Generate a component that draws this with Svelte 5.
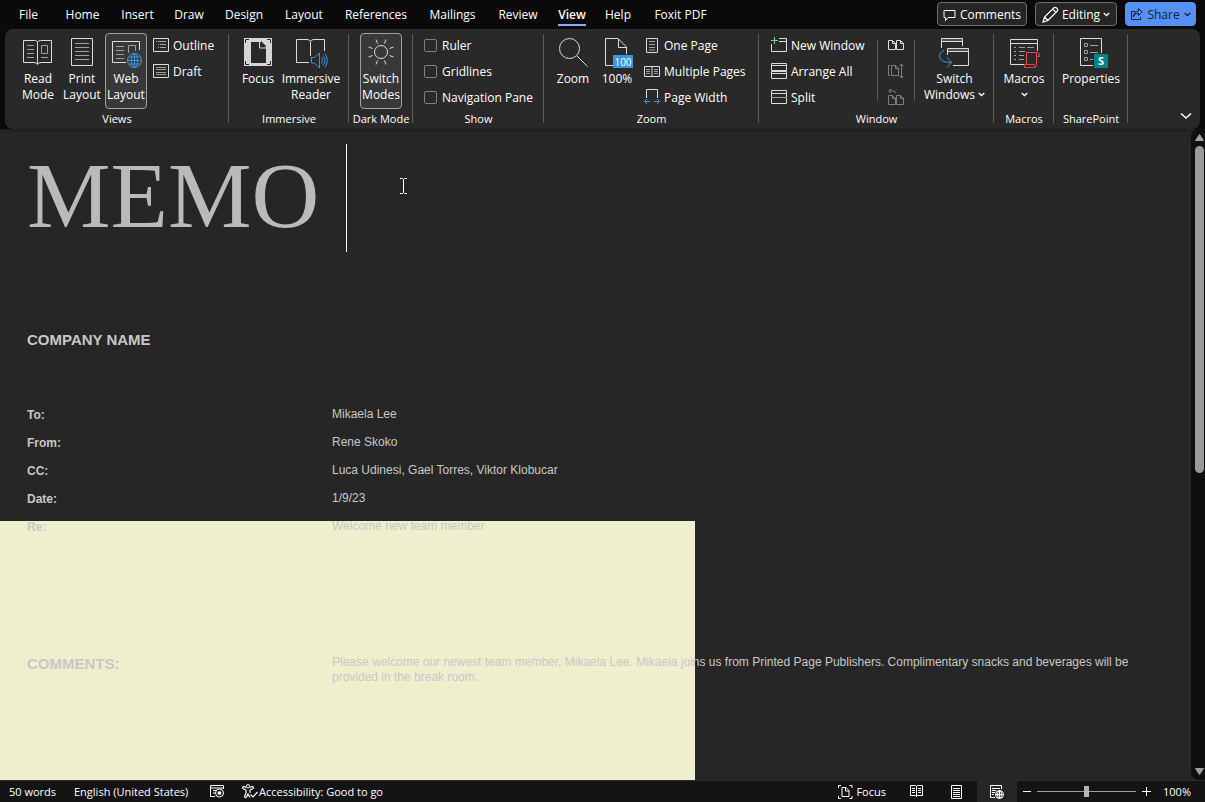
<script>
  const tabs = ['File', 'Home', 'Insert', 'Draw', 'Design', 'Layout', 'References', 'Mailings', 'Review', 'View', 'Help', 'Foxit PDF'];
  const fields = [
    ['To:', 'Mikaela Lee'],
    ['From:', 'Rene Skoko'],
    ['CC:', 'Luca Udinesi, Gael Torres, Viktor Klobucar'],
    ['Date:', '1/9/23'],
    ['Re:', 'Welcome new team member']
  ];
  const toggles = ['Ruler', 'Gridlines', 'Navigation Pane'];
  let zoom = $state(100);
</script>

{#snippet chevron()}
  <svg class="chev" width="7" height="5" viewBox="0 0 7 5"><path d="M.7 1 3.5 3.6 6.3 1" stroke-width="1.3" /></svg>
{/snippet}

<div class="app">
  <header>
    <nav>
      {#each tabs as tab}
        <button class="tab" class:active={tab === 'View'}><span>{tab}</span></button>
      {/each}
    </nav>
    <div class="actions">
      <button class="action comments">
        <svg width="13" height="14" viewBox="0 0 13 14"><path d="M1 2.500h11v7h-7l-2.500 3v-3h-1.500z" /></svg>
        Comments
      </button>
      <button class="action editing">
        <svg width="17" height="17" viewBox="0 0 17 17"><path d="M1 16 2.500 11 12 1.700Q13.300.700 14.900 2.200T15.300 5L5.900 14.500zM10.700 3l3.300 3.300M2.500 11l3.400 3.500" stroke-width="1.200" /></svg>
        Editing {@render chevron()}
      </button>
      <button class="action share">
        <svg width="13" height="13" viewBox="0 0 13 13"><path d="M5 3.500H1.500v8h9V9M3.500 9Q4 5 8.500 5V7.500L12.300 4 8.500 .7V3Q3.500 3.500 3.500 9z" /></svg>
        Share {@render chevron()}
      </button>
    </div>
  </header>

  <section class="ribbon" aria-label="View">
    <div class="group">
      <div class="tools views">
        <button class="big">
          <svg width="32" height="32" viewBox="0 0 32 32">
            <path d="M15.500 6Q15 4.500 12.500 4.500H1.500v22H12Q15 26.500 15.500 28.500 16 26.500 19 26.500H29.500v-22H18.500Q16 4.500 15.500 6V28" />
            <path class="dim" d="M5 9.500h7M5 13.500h7M5 17.500h7M5 21.500h7M19 21.500h7M19.500 9.500h6v8h-6z" />
          </svg>
          <span>Read<br />Mode</span>
        </button>
        <button class="big">
          <svg width="32" height="32" viewBox="0 0 32 32">
            <path d="M5.500 2.500h21v27h-21z" />
            <path class="dim" d="M9 7.500h14M9 11.500h14M9 15.500h14M9 19.500h14M9 23.500h14" />
          </svg>
          <span>Print<br />Layout</span>
        </button>
        <button class="big selected">
          <svg width="32" height="32" viewBox="0 0 32 32">
            <path d="M29.500 14V5.500h-27v21H16" />
            <path class="dim" d="M6 10.500h8M6 14.500h8M6 18.500h8M6 22.500h8M18.500 17V9.500h7V15" />
            <g class="blue"><circle cx="24.500" cy="24.500" r="7" /><ellipse cx="24.500" cy="24.500" rx="3" ry="7" /><path d="M17.500 24.500h14M18.500 21h12M18.500 28h12M24.500 17.500v14" /></g>
          </svg>
          <span>Web<br />Layout</span>
        </button>
        <div class="stack">
          <button class="small">
            <svg width="16" height="16" viewBox="0 0 16 16"><path d="M.5.5h15v13H.5z" /><path class="dim" d="M3 3.500h1M5 3.500h8M5 6.500h1M7 6.500h6M5 9.500h1M7 9.500h6" /></svg>
            Outline
          </button>
          <button class="small">
            <svg width="16" height="16" viewBox="0 0 16 16"><path d="M.5.5h15v13H.5z" /><path class="dim" d="M3 3.500h10M3 5.500h10M3 8.500h10M3 10.500h10" /></svg>
            Draft
          </button>
        </div>
      </div>
      <h2>Views</h2>
    </div>

    <div class="group">
      <div class="tools immersive">
        <button class="big focus">
          <svg width="32" height="32" viewBox="0 0 32 32">
            <path d="M2 2h28v28H2z" fill="#d6d6d6" stroke="none" />
            <path d="M9 6h9.500l5.500 5.500V27H9z" fill="#292929" stroke="none" />
            <path d="M17.500 6v6H24" stroke="#d6d6d6" /><path d="M19 5v5.500h5.500z" fill="#292929" stroke="none" />
            <path d="M3.500 7V3.500H7M25 3.500h3.500V7M3.500 25v3.500H7M25 28.500h3.500V25" stroke="#292929" />
          </svg>
          <span>Focus</span>
        </button>
        <button class="big reader">
          <svg width="32" height="32" viewBox="0 0 32 32">
            <path d="M14 26.500H1.500v-23H12Q15 3.500 15.500 5.500 16 3.500 19 3.500H29.500V15M15.500 5.500V20" />
            <path class="blue" d="M16.500 21.500h3l5-4.500v15l-5-5h-3zM26.500 21.500q2 3 0 6M28 19.500q4 5 0 10M30 17.500q4.500 7 0 14" />
          </svg>
          <span>Immersive<br />Reader</span>
        </button>
      </div>
      <h2>Immersive</h2>
    </div>

    <div class="group">
      <div class="tools modes">
        <button class="big selected">
          <svg width="32" height="32" viewBox="0 0 32 32">
            <circle cx="16" cy="16" r="6.500" />
            <path d="M19.500 7.500 21 3.500M24.500 12.500 28.500 11M24.500 19.500 28.500 21M19.500 24.500 21 28.500M12.500 24.500 11 28.500M7.500 19.500 3.500 21M7.500 12.500 3.500 11M12.500 7.500 11 3.500" />
          </svg>
          <span>Switch<br />Modes</span>
        </button>
      </div>
      <h2>Dark Mode</h2>
    </div>

    <div class="group">
      <div class="tools show">
        <div class="stack">
          {#each toggles as name}
            <label class="small check"><input type="checkbox" />{name}</label>
          {/each}
        </div>
      </div>
      <h2>Show</h2>
    </div>

    <div class="group">
      <div class="tools zoom">
        <button class="big">
          <svg width="32" height="32" viewBox="0 0 32 32"><circle cx="12.500" cy="12.500" r="10" /><path d="m20 20 10.500 10.500" /></svg>
          <span>Zoom</span>
        </button>
        <button class="big">
          <svg width="32" height="32" viewBox="0 0 32 32">
            <path d="M12 29.500H4.500v-27H17l8.500 8.500V18M17.500 3v8.500H25" />
            <path d="M12 19h20v13H12z" fill="#3a96dd" stroke="none" />
            <text x="22" y="29.500" text-anchor="middle">100</text>
          </svg>
          <span>100%</span>
        </button>
        <div class="stack">
          <button class="small">
            <svg width="16" height="16" viewBox="0 0 16 16"><path d="M2.500.5h11v14h-11z" /><path class="dim" d="M5 3.500h6M5 6.500h6M5 9.500h6M5 12h6" /></svg>
            One Page
          </button>
          <button class="small">
            <svg width="16" height="16" viewBox="0 0 16 16"><path d="M.5 2.500h15v10H.5zM8 2v11" /><path class="dim" d="M2 5.500h4M2 7.500h4M2 9.500h4M10 5.500h4M10 7.500h4M10 9.500h4" /></svg>
            Multiple Pages
          </button>
          <button class="small">
            <svg width="16" height="16" viewBox="0 0 16 16"><path d="M2.500 8V-.5h11V8" /><path class="blue" d="M.5 11.500H6M3 9 .5 11.500 3 14M15.500 11.500H10M13 9l2.500 2.500L13 14" /></svg>
            Page Width
          </button>
        </div>
      </div>
      <h2>Zoom</h2>
    </div>

    <div class="group">
      <div class="tools window">
        <div class="stack labelled">
          <button class="small">
            <svg width="16" height="16" viewBox="0 0 16 16"><path d="M.5 6v7.500h15V.5H8M8 3.500h8" /><path d="M3.500 -1v7M0 2.500h7" stroke="#6fdc7c" /></svg>
            New Window
          </button>
          <button class="small">
            <svg width="16" height="16" viewBox="0 0 16 16"><path d="M.5-.5h15v7H.5zM.5 7.500h15v7H.5zM0 1.500h16M0 9.500h16" /></svg>
            Arrange All
          </button>
          <button class="small">
            <svg width="16" height="16" viewBox="0 0 16 16"><path d="M.5.5h15v13H.5zM0 3.500h16" /><path class="dim" d="M0 7.500h16" /></svg>
            Split
          </button>
        </div>
        <div class="stack framed">
          <button class="small" aria-label="View Side by Side">
            <svg width="16" height="16" viewBox="0 0 16 16"><path d="M.5 2.500h4l3 3v6h-7zM8.500 2.500h4l3 3v6h-7zM4.500 2.500v3h3M12.500 2.500v3h3" /></svg>
          </button>
          <button class="small" aria-label="Synchronous Scrolling">
            <svg class="off" width="16" height="16" viewBox="0 0 16 16"><path d="M2 1.500H.5v10H2M3.500 1.500h4l3 3v7h-7zM7.500 1.500v3h3M13.500 0v14M11.500 2l2-2 2 2M11.500 12l2 2 2-2" /></svg>
          </button>
          <button class="small" aria-label="Reset Window Position">
            <svg class="off" width="16" height="16" viewBox="0 0 16 16"><path d="M.5 5.500h4l3 3v6h-7zM8.500 5.500h4l3 3v6h-7zM4.500 5.500v3h3M12.500 5.500v3h3M3-1 .7 1 3 3M1 1h4.500q2 0 2 2" /></svg>
          </button>
        </div>
        <button class="big switch">
          <svg width="32" height="32" viewBox="0 0 32 32">
            <path d="M2.500 12V2.500h21V10M2.500 5.500h21M8.500 19v-6.500h21v17H14M8.500 15.500h21" />
            <path d="M3 4h20M9 14h20" stroke="#777" /><path class="blue" d="M5 14.500Q.5 16 .5 20 1 26.500 12 26.500M8 21.500l4.500 5-4.500 5" />
          </svg>
          <span>Switch<br />Windows {@render chevron()}</span>
        </button>
      </div>
      <h2>Window</h2>
    </div>

    <div class="group">
      <div class="tools macros">
        <button class="big">
          <svg width="32" height="32" viewBox="0 0 32 32">
            <path d="M29.500 15V3.500h-27v25H16M2.500 7.500h27" />
            <path class="dim" d="M6 11.500h2M6 15.500h2M6 19.500h2M6 23.500h2M11 11.500h6M19 11.500h7M11 15.500h6M11 19.500h5M11 23.500h5" />
            <path d="M18.500 28V16.500h11q2.500 0 2 4h-3V29q-.5 2.500-3 2.500H16.500v-3H26q0 3 1.500 3M28.500 20v-3.500" stroke="#e8484c" />
          </svg>
          <span>Macros<br />{@render chevron()}</span>
        </button>
      </div>
      <h2>Macros</h2>
    </div>

    <div class="group">
      <div class="tools sharepoint">
        <button class="big">
          <svg width="32" height="32" viewBox="0 0 32 32">
            <path d="M18 29.500H5.500v-27h21V17" />
            <path class="dim" d="M9.500 7.500h3v3h-3zM9.500 14.500h3v3h-3zM9.500 21.500h3v3h-3zM15 9.500h8M15 16.500h8M15 23.500h3" />
            <path d="M19 18h14v14H19z" fill="#038387" stroke="none" />
            <text class="badge" x="26" y="29" text-anchor="middle">S</text>
          </svg>
          <span>Properties</span>
        </button>
      </div>
      <h2>SharePoint</h2>
    </div>

    <button class="collapse" aria-label="Collapse the Ribbon">
      <svg width="12" height="8" viewBox="0 0 12 8"><path d="m1 1.500 5 4.500 5-4.500" stroke-width="1.500" /></svg>
    </button>
  </section>

  <main>
    <article>
      <div class="highlight"></div>
      <h1><span>MEMO</span><i class="caret"></i>
        <svg class="pointer" width="9" height="17" viewBox="0 0 9 17"><path d="M1 .5h2.500l1 1 1-1H8M4.500 1v14M1 15.500h2.500l1-1 1 1H8" stroke="#fff" /></svg>
      </h1>
      <h3>COMPANY NAME</h3>
      <dl>
        {#each fields as [term, value]}
          <dt>{term}</dt>
          <dd>{value}</dd>
        {/each}
      </dl>
      <div class="remarks">
        <h3>COMMENTS:</h3>
        <p>Please welcome our newest team member, Mikaela Lee. Mikaela joins us from Printed Page Publishers. Complimentary snacks and beverages will be provided in the break room.</p>
      </div>
    </article>
    <div class="scroll">
      <svg width="9" height="7" viewBox="0 0 9 7"><path d="M4.500.5 8.500 6.500h-8z" fill="#a0a0a0" stroke="#a0a0a0" /></svg>
      <div class="track"><div class="thumb"></div></div>
      <svg width="9" height="7" viewBox="0 0 9 7"><path d="M4.500 6.500 8.500.5h-8z" fill="#a0a0a0" stroke="#a0a0a0" /></svg>
    </div>
  </main>

  <footer>
    <button class="words">50 words</button>
    <button class="language">English (United States)</button>
    <button class="record" aria-label="Record Macro">
      <svg width="15" height="13" viewBox="0 0 15 13"><path d="M5 11.500H.5V.5h13V4M.5 3h13M3 5.500h3M3 8h2" /><circle cx="9.500" cy="8" r="4" /><circle cx="9.500" cy="8" r="1.500" fill="#fff" /></svg>
    </button>
    <button class="access">
      <svg width="16" height="15" viewBox="0 0 16 15"><circle cx="6" cy="2.300" r="1.700" /><path d="M4.300 3.500 1.500 2.500Q0 3.500 1 4.500L4 6v3L2.500 13q1 1.500 2 0L6 10l2 3.500M7.700 3.500l2.800-1q1.500 1 .5 2L8 6v3M8.500 10.500l2.500 2.500 4.500-5" stroke-width="1.200" /></svg>
      Accessibility: Good to go
    </button>
    <div class="modesbar">
      <button class="focusmode">
        <svg width="15" height="14" viewBox="0 0 15 14"><path d="M3 .5H.5V3M11.500.5H14V3M3 13.500H.5V11M11.500 13.500H14V11M4 2.500h4l3 3v6H4zM7.500 2.500v3.500H11" /></svg>
        Focus
      </button>
      <button aria-label="Read Mode">
        <svg width="14" height="13" viewBox="0 0 14 13"><path d="M.5.500h5l1 1 1-1h5v10h-5l-1 1-1-1h-5zM6.500 1v11M2 3.500h3M2 5.500h3M2 7.500h3M8 3.500h3M8 5.500h3M8 7.500h3" /></svg>
      </button>
      <button aria-label="Print Layout">
        <svg width="12" height="14" viewBox="0 0 12 14"><path d="M.5.500h10v13H.5zM2 3.500h7M2 5.500h7M2 7.500h7M2 9.500h7M2 11.500h7" /></svg>
      </button>
      <button class="current" aria-label="Web Layout">
        <svg width="14" height="14" viewBox="0 0 14 14"><path d="M5 12.500H.5V.5h11V4M2 3.500h8M2 5.500h4M2 7.500h3M2 9.500h2" /><circle cx="9.500" cy="9.500" r="4" /><path d="M5.500 9.500h8M9.500 5.500v8" /><ellipse cx="9.500" cy="9.500" rx="2" ry="4" /></svg>
      </button>
      <button class="step" aria-label="Zoom out"><svg width="9" height="9" viewBox="0 0 9 9"><path d="M0 4.500h8" /></svg></button>
      <input type="range" min="10" max="190" bind:value={zoom} aria-label="Zoom level" />
      <button class="step" aria-label="Zoom in"><svg width="9" height="9" viewBox="0 0 9 9"><path d="M0 4.500h9M4.500 0v9" /></svg></button>
      <button class="percent">{zoom}%</button>
    </div>
  </footer>
</div>

<style>
  :global(body) { margin: 0; background: #0a0a0a; }
  .app { display: flex; flex-direction: column; min-height: 100vh; font: 12px/16px "Open Sans", "Noto Sans", sans-serif; color: #fff; background: #0a0a0a; }
  button { font: inherit; color: inherit; background: none; border: 0; padding: 0; margin: 0; white-space: nowrap; }
  svg { display: block; flex: none; fill: none; stroke: #dcdcdc; overflow: visible; }
  .dim { stroke: #a0a0a0; }
  .blue { stroke: #3a96dd; }
  .off { stroke: #808080; }
  .chev { display: inline-block; stroke: currentColor; vertical-align: 2px; }

  header { display: flex; justify-content: space-between; height: 29px; padding: 0 9px 0 2px; }
  nav { display: grid; grid-template-columns: 53px 55px 55px 48px 62px 58px 86px 67px 64px 44px 48px 77px; }
  .tab { display: flex; justify-content: center; padding-top: 7px; }
  .tab span { height: 17px; }
  .active { font-weight: 600; }
  .active span { border-bottom: 2px solid #8ab0f8; }
  .actions { display: flex; gap: 8px; padding-top: 2px; }
  .action { box-sizing: border-box; display: flex; align-items: center; justify-content: center; gap: 4px; height: 24px; padding-top: 1px; border: 1px solid #707070; border-radius: 4px; background: #262626; }
  .comments { width: 90px; }
  .editing { width: 82px; gap: 3px; }
  .share { width: 71px; color: #10203c; background: #5690f4; border-color: #5690f4; }
  .action svg { stroke: currentColor; }

  .ribbon { display: grid; grid-template-columns: 224px 120px 64px 131px 215px 235px 60px 74px 1fr; margin: 0 5px; height: 100px; border-radius: 8px; background: #292929; }
  .group { position: relative; padding-top: 4px; }
  .group::after { content: ""; position: absolute; right: 0; top: 5px; bottom: 6px; width: 1px; background: #5c5c5c; }
  h2 { margin: 0; font-size: 11px; line-height: 20px; font-weight: 400; text-align: center; white-space: nowrap; }
  .tools { display: flex; height: 76px; }
  .big { box-sizing: border-box; display: flex; flex-direction: column; align-items: center; gap: 3px; padding-top: 3px; width: 44px; height: 76px; }
  .selected { width: 42px; padding-top: 2px; border: 1px solid #a0a0a0; border-radius: 4px; background: #383838; }
  .stack { display: grid; grid-template-rows: repeat(3, 26px); align-content: start; justify-items: start; }
  .small { display: flex; align-items: center; gap: 4px; }
  .views { padding-left: 11px; }
  .views .selected { margin-left: 1px; }
  .views .stack { margin-left: 6px; }
  .immersive { padding-left: 11px; gap: 5px; }
  .focus { width: 36px; }
  .reader { width: 60px; }
  .modes { justify-content: center; }
  .show { padding-left: 11px; }
  .check { gap: 5px; }
  input[type='checkbox'] { appearance: none; box-sizing: border-box; width: 13px; height: 13px; margin: 0 0 2px; border: 1px solid #808080; border-radius: 2px; }
  .zoom { padding-left: 7px; }
  .zoom .stack { margin-left: 5px; }
  .window { padding-left: 12px; }
  .labelled { width: 106px; }
  .framed { position: relative; width: 38px; padding-left: 11px; box-sizing: border-box; }
  .framed::before { content: ""; position: absolute; inset: 7px 0 8px 0; border: solid #5c5c5c; border-width: 0 1px; }
  .switch { flex: 1; }
  .macros, .sharepoint { justify-content: center; }
  text { font: 10px "Open Sans", sans-serif; fill: #fff; stroke: none; }
  .badge { font-weight: 700; font-size: 11px; }
  .collapse { align-self: end; justify-self: end; padding: 0 8px 9px; }
  .collapse svg { stroke: #fff; }

  main { flex: 1; display: flex; background: linear-gradient(#1e1e1e, #262626 4px); }
  article { position: relative; flex: 1; min-width: 0; padding: 15px 27px 0; color: #c8c8c8; font: 12px/15px "Liberation Sans", Arial, sans-serif; }
  article > * { position: relative; }
  .highlight { position: absolute; left: 0; bottom: 0; width: 695px; height: 259px; background: #f0efcd; }
  h1 { display: flex; margin: 0; height: 108px; color: #bababa; font: 94px/102px "Liberation Serif", serif; }
  .caret { width: 1px; height: 108px; margin-left: 27px; background: #fff; }
  .pointer { margin: 34px 0 0 52px; }
  h3 { margin: 0; font-size: 15px; line-height: 18px; }
  h1 + h3 { margin-top: 79px; }
  dl { display: grid; grid-template-columns: 305px 1fr; grid-auto-rows: 28px; align-items: center; margin: 51px 0 0; }
  dt { font-weight: 700; padding-top: 2px; }
  dd { margin: 0; }
  .remarks { display: grid; grid-template-columns: 305px 1fr; margin-top: 115px; }
  .remarks p { margin: 0; }

  .scroll { display: flex; flex-direction: column; align-items: center; gap: 5px; box-sizing: border-box; width: 14px; padding: 5px 0 5px 3px; border-radius: 8px 0 0 8px; background: #0f0f0f; }
  .track { flex: 1; display: flex; }
  .thumb { width: 9px; height: 53%; border-radius: 5px; background: #9a9a9a; }

  footer { display: flex; align-items: center; height: 22px; padding: 0 8px 0 9px; background: #141414; font-size: 11px; box-shadow: inset 0 1px #2c2c2c; }
  footer button { display: flex; align-items: center; padding-top: 1px; }
  footer svg { stroke: #fff; }
  .words { width: 65px; }
  .language { width: 136px; }
  .record { width: 32px; }
  .access { gap: 1px; }
  .modesbar { display: flex; align-items: center; margin-left: auto; height: 22px; }
  .modesbar button { justify-content: center; width: 40px; height: 22px; }
  .modesbar .focusmode { width: auto; gap: 3px; margin-right: 11px; }
  .modesbar .current { background: #262626; }
  .modesbar .step { width: 20px; }
  .modesbar .percent { width: 40px; margin-left: 1px; }
  input[type='range'] { appearance: none; width: 99px; height: 12px; margin: 0; background: linear-gradient(#a0a0a0, #a0a0a0) center / 100% 1px no-repeat; }
  input[type='range']::-webkit-slider-thumb { appearance: none; width: 5px; height: 11px; background: #b4b4b4; }
</style>
